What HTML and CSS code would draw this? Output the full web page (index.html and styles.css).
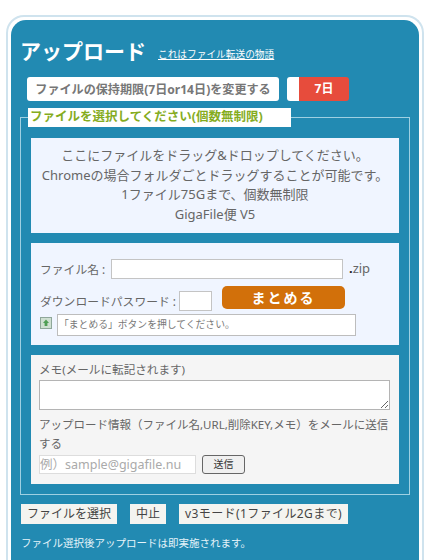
FILE: index.html
```html
<!DOCTYPE html>
<html lang="ja">
<head>
<meta charset="utf-8">
<title>GigaFile</title>
<link rel="stylesheet" href="styles.css">
</head>
<body>
<div class="frame">
  <section class="card">
    <header class="head">
      <h1>アップロード</h1>
      <a class="story" href="#">これはファイル転送の物語</a>
    </header>
    <div class="term">
      <button class="term-btn">ファイルの保持期限(7日or14日)を変更する</button>
      <div class="toggle"><span class="knob"></span><span class="days">7日</span></div>
    </div>
    <fieldset class="select">
      <legend>ファイルを選択してください(個数無制限)</legend>
      <div class="panel drop">
        <p>ここにファイルをドラッグ&amp;ドロップしてください。</p>
        <p>Chromeの場合フォルダごとドラッグすることが可能です。</p>
        <p>1ファイル75Gまで、個数無制限</p>
        <p>GigaFile便 V5</p>
      </div>
      <div class="panel zip">
        <div class="row name-row">
          <label>ファイル名 :</label>
          <input class="name-input" type="text">
          <span class="ext"><b>.</b>zip</span>
        </div>
        <div class="row pass-row">
          <label>ダウンロードパスワード :</label>
          <input class="pass-input" type="text">
          <button class="merge">まとめる</button>
        </div>
        <div class="row status-row">
          <svg class="mini" width="12" height="12" viewBox="0 0 12 12"><rect x=".5" y=".5" width="11" height="11" fill="#cfe0d2" stroke="#8fa79a"/><path d="M6 2.5 9 6H7.4v3H4.6V6H3z" fill="#4f9e55"/></svg>
          <div class="status">「まとめる」ボタンを押してください。</div>
        </div>
      </div>
      <div class="panel memo">
        <label class="memo-label">メモ(メールに転記されます)</label>
        <textarea class="memo-text"></textarea>
        <p class="mail-note">アップロード情報（ファイル名,URL,削除KEY,メモ）をメールに送信する</p>
        <div class="row mail-row">
          <input class="mail-input" type="text" placeholder="例）sample@gigafile.nu">
          <button class="send">送信</button>
        </div>
      </div>
    </fieldset>
    <div class="actions">
      <button class="act">ファイルを選択</button>
      <button class="act">中止</button>
      <button class="act act-wide">v3モード(1ファイル2Gまで)</button>
    </div>
    <p class="foot">ファイル選択後アップロードは即実施されます。</p>
  </section>
</div>
</body>
</html>
```

FILE: styles.css
```css
* { box-sizing: border-box; }
html, body { margin: 0; height: 100%; overflow: hidden; background: #fff; }
body {
  font-family: "Noto Sans", "Noto Sans CJK JP", sans-serif;
  color: #666;
  font-size: 13px;
}
p { margin: 0; }
button, input, textarea { font-family: inherit; margin: 0; }

.frame {
  margin: 15px 0 0 6px;
  width: 418px;
  height: 560px;
  padding: 3px;
  border: 2px solid #cfe3ee;
  border-bottom: 0;
  border-radius: 18px 18px 0 0;
}
.card {
  height: 100%;
  background: #228ab2;
  border-radius: 15px 15px 0 0;
  padding: 15px 9px 0 9px;
}
.head { display: flex; align-items: flex-end; height: 33px; }
.head h1 {
  margin: 0 0 2px;
  font-size: 21px;
  line-height: 30px;
  font-weight: 700;
  color: #fff;
  width: 138px;
  flex: none;
  white-space: nowrap;
}
.story {
  color: #fff;
  font-size: 9.7px;
  line-height: 14px;
  margin-bottom: 6px;
  white-space: nowrap;
}
.term { display: flex; margin: 9px 0 0 7px; height: 24px; }
.term-btn {
  width: 252px;
  height: 24px;
  border: 0;
  padding: 0;
  background: #fff;
  border-radius: 3px;
  color: #777;
  font-size: 12.1px;
  font-weight: 700;
  white-space: nowrap;
}
.toggle {
  display: flex;
  margin-left: 8px;
  width: 62px;
  border-radius: 3px;
  overflow: hidden;
}
.knob { width: 12px; background: #fff; }
.days {
  flex: 1;
  background: #e74c3c;
  color: #fff;
  font-size: 12px;
  font-weight: 700;
  line-height: 24px;
  text-align: center;
}
.select {
  margin: 7px 0 0 0;
  padding: 11px 10px 10px 10px;
  width: 390px;
  height: 387px;
  border: 1px solid #9fd0e2;
  min-width: 0;
}
.select legend {
  margin-left: -3px;
  padding: 0 2px;
  width: 263px;
  height: 19px;
  background: #fff;
  color: #85ac1e;
  font-size: 12.5px;
  font-weight: 700;
  line-height: 18px;
  white-space: nowrap;
}
.panel { width: 368px; background: #f0f5ff; }
.drop {
  height: 95px;
  margin-top: 0;
  padding-top: 8px;
  text-align: center;
  font-size: 13px;
  line-height: 19.5px;
  white-space: nowrap;
}
.zip {
  height: 102px;
  margin-top: 10px;
  padding: 16px 8px 0 9px;
}
.row { display: flex; align-items: center; }
.name-row { height: 20px; }
.row label { font-size: 11.8px; white-space: nowrap; }
.name-row label { width: 71px; flex: none; margin-top: -2px; }
input[type="text"] {
  background: #fff;
  border: 1px solid #c4c4c4;
  padding: 0 2px;
  outline: 0;
}
.name-input { width: 232px; height: 20px; }
.ext { margin-left: 6px; font-size: 13px; margin-top: -2px; }
.ext b { color: #222; font-weight: 700; }
.pass-row { height: 24px; margin-top: 7px; }
.pass-row label { width: 139px; flex: none; margin-top: 4px; }
.pass-input { width: 33px; height: 20px; margin-top: 6px; }
.merge {
  width: 123px;
  height: 23px;
  margin: -2px 0 0 10px;
  border: 0;
  border-radius: 5px;
  background: #d2700a;
  color: #fff;
  font-size: 14px;
  font-weight: 700;
  letter-spacing: 2px;
  padding: 0;
}
.status-row { margin-top: 4px; align-items: flex-start; }
.mini { flex: none; margin: 3px 5px 0 0; }
.status {
  width: 299px;
  height: 22px;
  background: #fff;
  border: 1px solid #bdbdbd;
  font-size: 9.8px;
  line-height: 20px;
  padding-left: 1px;
  color: #777;
  white-space: nowrap;
}
.memo {
  height: 129px;
  margin-top: 10px;
  background: #f5f5f5;
  padding: 5px 9px 0 8px;
}
.memo-label { display: block; font-size: 11.6px; line-height: 20px; }
.memo-text {
  display: block;
  width: 351px;
  height: 30px;
  border: 1px solid #b4b4b4;
  background: #fff;
  margin-top: 0;
  border-radius: 0;
  outline: 0;
}
.mail-note { font-size: 11.5px; line-height: 19px; margin-top: 5px; }
.mail-row { margin-top: 2px; }
.mail-input.mail-input {
  width: 157px;
  height: 19px;
  border: 1px solid #ddd;
  border-radius: 0;
  padding: 0;
  font-size: 12.5px;
}
.mail-input::placeholder { color: #aaa; opacity: 1; }
.send {
  width: 43px;
  height: 19px;
  margin: -1px 0 0 6px;
  padding: 0;
  border: 1px solid #666;
  border-radius: 3px;
  background: #f0f0f0;
  color: #333;
  font-size: 10px;
  line-height: 14px;
}
.actions { display: flex; gap: 13px; margin: 9px 0 0 1px; }
.act {
  height: 20px;
  padding: 0 6px;
  border: 0;
  border-radius: 0;
  background: #f4f4f0;
  color: #444;
  font-size: 12px;
  line-height: 20px;
  white-space: nowrap;
}
.act-wide { letter-spacing: .4px; }
.foot { margin: 11px 0 0 1px; color: #e6f4fa; font-size: 10.5px; line-height: 16px; white-space: nowrap; }
```
